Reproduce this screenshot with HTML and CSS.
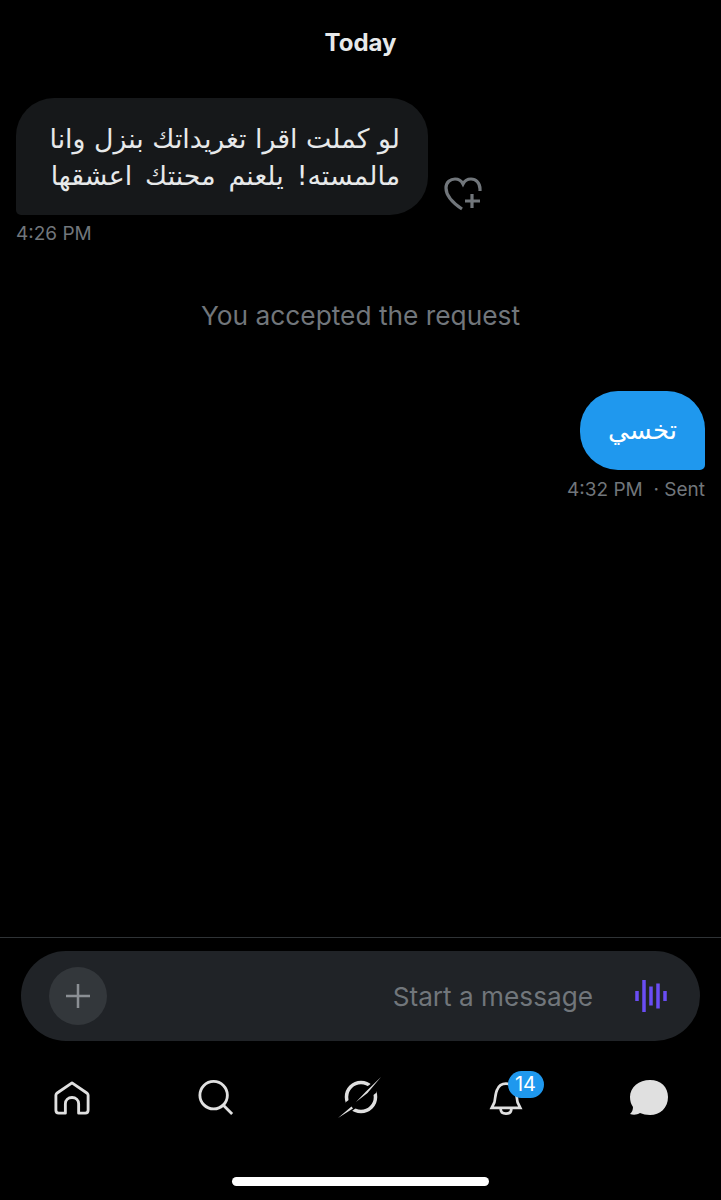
FILE: index.html
```html
<!DOCTYPE html>
<html lang="en">
<head>
    <meta charset="UTF-8">
    <meta name="viewport" content="width=device-width, initial-scale=1.0">
    <title>Messages</title>
    <link rel="stylesheet" href="styles.css">
</head>
<body>
    <div class="screen">
        <main class="chat">
            <div class="day">Today</div>

            <div class="msg-row">
                <div class="bubble bubble-in" dir="rtl">لو كملت اقرا تغريداتك بنزل وانا<br><span class="line-wide">مالمسته! يلعنم محنتك اعشقها</span></div>
                <svg class="react" width="38" height="34" viewBox="0 0 38 34" fill="none" stroke="#71767b" stroke-width="3.200">
                    <path d="M18 32 C12 28 2 21 2 11 C2 5 6.500 2 11 2 C14.500 2 17.500 4 19 7 C20.500 4 23.500 2 27 2 C32 2 36 6 36 12 L36 14"/>
                    <path d="M28 17 V31 M21 24 H36"/>
                </svg>
            </div>
            <div class="time">4:26 PM</div>

            <div class="notice">You accepted the request</div>

            <div class="bubble bubble-out" dir="rtl">تخسي</div>
            <div class="time time-out">4:32 PM &nbsp;· Sent</div>
        </main>

        <footer class="bottom">
            <div class="composer">
                <div class="add-btn">
                    <svg width="26" height="26" viewBox="0 0 26 26" stroke="#8b8f94" stroke-width="2.500"><path d="M13 1 V25 M1 13 H25"/></svg>
                </div>
                <span class="placeholder">Start a message</span>
                <svg class="wave" width="34" height="34" viewBox="0 0 34 34" stroke="#6a4df5" stroke-width="3.500">
                    <path d="M3 12 V22 M10 1 V33 M17 7.500 V26.500 M24 4.500 V29.500 M31 12 V22"/>
                </svg>
            </div>

            <nav class="tabs">
                <svg width="36" height="36" viewBox="0 0 38 38" fill="none" stroke="#e0e0e0" stroke-width="3" stroke-linejoin="round">
                    <path d="M19 3 L35 14 C35.500 14.500 36 15 36 16 V32 C36 34 35 35 33 35 H26 V25 C26 21 23 18.500 19 18.500 C15 18.500 12 21 12 25 V35 H5 C3 35 2 34 2 32 V16 C2 15 2.500 14.500 3 14 Z"/>
                </svg>
                <svg width="36" height="36" viewBox="0 0 38 38" fill="none" stroke="#e0e0e0" stroke-width="3">
                    <circle cx="16.500" cy="16" r="14.500"/><path d="M26.500 26.500 L36 36"/>
                </svg>
                <svg width="44" height="44" viewBox="0 0 44 44" fill="none">
                    <circle cx="23" cy="21" r="14.500" stroke="#e0e0e0" stroke-width="3.500"/>
                    <path d="M44 0 L34 7 L8 26 L0 44 L14 35 L38 17 Z" fill="#000"/>
                    <path d="M43 1 L28 15.500 L18 26 L29.500 17 Z M0 42 L13.500 30.500 L15 32.500 Z" fill="#e0e0e0"/>
                </svg>
                <div class="bell">
                    <svg width="34" height="34" viewBox="0 0 36 38" fill="none" stroke="#e0e0e0" stroke-width="3">
                        <path d="M2 30 L5 24 C6 20 6 14 8 10 C10 5 14 3 18 3 C22 3 26 5 28 10 C30 14 30 20 31 24 L34 30 Z"/>
                        <path d="M12 31 C12 35 15 36.500 18 36.500 C21 36.500 24 35 24 31"/>
                    </svg>
                    <span class="badge">14</span>
                </div>
                <svg class="tab-chat" width="40" height="38" viewBox="0 0 40 38">
                    <path d="M21 1 C32 1 39 8 39 18 C39 29 31 36 21 36 C17 36 14 35 11 34 C8 36 4 36 1 35 C3 33 4 31 4 28 C2 25 1 22 1 18 C1 8 10 1 21 1 Z" fill="#e0e0e0"/>
                </svg>
            </nav>

            <div class="home-bar"></div>
        </footer>
    </div>
</body>
</html>
```

FILE: styles.css
```css
* {
    box-sizing: border-box;
}
body {
    margin: 0;
    background-color: #000;
    font-family: Inter, "Liberation Sans", sans-serif;
    color: #e7e9ea;
}
.screen {
    width: 721px;
    height: 1200px;
    display: flex;
    flex-direction: column;
    justify-content: space-between;
}
.chat {
    display: flex;
    flex-direction: column;
    padding: 0 16px;
}
.day {
    margin-top: 28px;
    text-align: center;
    font-size: 24px;
    line-height: 30px;
    font-weight: 700;
    color: #e7e9ea;
}
.msg-row {
    margin-top: 40px;
    display: flex;
    align-items: flex-end;
}
.react {
    margin-left: 16px;
    margin-bottom: 4px;
}
.bubble {
    font-family: "DejaVu Sans", "Noto Sans", sans-serif;
}
.bubble-in {
    width: 412px;
    height: 117px;
    padding: 22px 28px 0 0;
    background-color: #16181a;
    border-radius: 38px 38px 38px 5px;
    font-size: 26.800px;
    line-height: 37px;
    color: #e7e9ea;
}
.line-wide {
    word-spacing: 4.500px;
}
.time {
    margin-top: 7px;
    font-size: 19px;
    line-height: 24px;
    color: #71767b;
}
.notice {
    margin-top: 53px;
    text-align: center;
    font-size: 26.300px;
    line-height: 34px;
    color: #71767b;
}
.bubble-out {
    align-self: flex-end;
    width: 125px;
    height: 79px;
    margin-top: 58px;
    padding-top: 21px;
    text-align: center;
    background-color: #1f98ee;
    border-radius: 38px 38px 5px 38px;
    font-size: 26px;
    line-height: 37px;
    color: #fff;
}
.time-out {
    align-self: flex-end;
    margin-top: 8px;
}
.bottom {
    border-top: 1px solid #2f3336;
    padding-top: 13px;
}
.composer {
    height: 90px;
    margin: 0 21px;
    padding: 0 32px 0 28px;
    display: flex;
    align-items: center;
    background-color: #202327;
    border-radius: 45px;
}
.add-btn {
    width: 58px;
    height: 58px;
    display: flex;
    align-items: center;
    justify-content: center;
    border-radius: 50%;
    background-color: #33373b;
}
.placeholder {
    margin-left: auto;
    margin-right: 41px;
    font-size: 26.200px;
    color: #71767b;
}
.tabs {
    height: 44px;
    margin-top: 35px;
    display: grid;
    grid-template-columns: repeat(5, 144px);
    align-items: center;
    justify-items: center;
}
.bell {
    position: relative;
    height: 34px;
    margin-left: 3px;
}
.tab-chat {
    margin-left: 1px;
}
.badge {
    position: absolute;
    top: -10px;
    left: 19px;
    width: 36px;
    height: 27px;
    border-radius: 14px;
    background-color: #1f98ee;
    color: #fff;
    font-size: 20px;
    line-height: 27px;
    text-align: center;
}
.home-bar {
    width: 257px;
    height: 9px;
    margin: 57px auto 14px;
    border-radius: 5px;
    background-color: #fff;
}
```
